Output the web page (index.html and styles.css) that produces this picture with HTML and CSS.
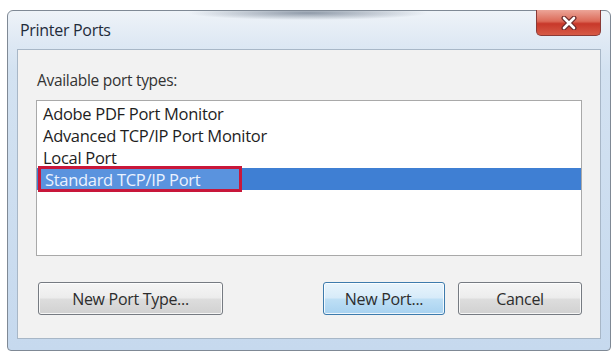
FILE: index.html
```html
<!DOCTYPE html>
<html>
<head>
<meta charset="utf-8">
<link rel="stylesheet" href="styles.css">
</head>
<body>
<div class="window">
  <div class="titlebar">
    <span class="title">Printer Ports</span>
    <div class="close" aria-label="Close">
      <svg width="16" height="14" viewBox="0 0 16 14">
        <path d="M3 2 L13 12 M13 2 L3 12" stroke="#6b2a2a" stroke-width="5" stroke-linecap="round"/>
        <path d="M3 2 L13 12 M13 2 L3 12" stroke="#ffffff" stroke-width="2.6" stroke-linecap="round"/>
      </svg>
    </div>
  </div>
  <div class="panel">
    <div class="label">Available port types:</div>
    <div class="listbox">
      <div class="row">Adobe PDF Port Monitor</div>
      <div class="row">Advanced TCP/IP Port Monitor</div>
      <div class="row">Local Port</div>
      <div class="row selected"><span class="mark">Standard TCP/IP Port</span></div>
    </div>
    <div class="buttons">
      <button class="btn btn-type">New Port Type...</button>
      <span class="spacer"></span>
      <button class="btn btn-default">New Port...</button>
      <button class="btn btn-cancel">Cancel</button>
    </div>
  </div>
</div>
</body>
</html>
```

FILE: styles.css
```css
html, body {
  margin: 0;
  padding: 0;
  background: #ffffff;
}

body {
  font-family: "Open Sans", "Noto Sans", sans-serif;
  color: #2a2a2a;
}

.window {
  box-sizing: border-box;
  margin: 10px 0 0 7px;
  width: 604px;
  height: 341px;
  border: 1px solid #7f8995;
  border-radius: 6px 6px 4px 4px;
  padding: 0 9px 11px 9px;
  display: flex;
  flex-direction: column;
  background:
    radial-gradient(ellipse 120px 7px at 300px 2px, rgba(80, 95, 115, 0.6), rgba(80, 95, 115, 0) 100%),
    linear-gradient(180deg, #eef3f8 0px, #dfe9f4 30px, #d3e2f1 60px, #c6d9ee 100%);
}

.titlebar {
  height: 38px;
  display: flex;
  align-items: center;
  justify-content: space-between;
}

.title {
  font-size: 16px;
  color: #1f2b3a;
  margin-left: 3px;
  letter-spacing: -0.3px;
}

.close {
  align-self: flex-start;
  margin-top: -1px;
  width: 65px;
  height: 26px;
  box-sizing: border-box;
  border: 1px solid #8a3a36;
  border-top: none;
  border-radius: 0 0 5px 5px;
  background: linear-gradient(180deg, #eca598 0%, #dc6a58 45%, #c8382a 55%, #d65a46 100%);
  display: flex;
  align-items: center;
  justify-content: center;
}

.panel {
  flex: 1;
  box-sizing: border-box;
  border: 1px solid #a8b7c7;
  background: #f2f2f2;
  padding: 20px 18px 0 18px;
  display: flex;
  flex-direction: column;
}

.label {
  font-size: 15.5px;
  line-height: 20px;
  height: 20px;
  margin-left: 1px;
  color: #333333;
  letter-spacing: -0.3px;
}

.listbox {
  margin-top: 10px;
  height: 156px;
  box-sizing: border-box;
  border: 1px solid #a9a9a9;
  background: #ffffff;
  padding-top: 1px;
}

.row {
  height: 22px;
  display: flex;
  align-items: center;
  padding-left: 6px;
  font-size: 16.5px;
  color: #1e1e1e;
  letter-spacing: -0.3px;
  white-space: nowrap;
}

.row.selected {
  background: #3f7fd3;
  color: #eaf2ff;
  padding-left: 1px;
}

.mark {
  box-sizing: border-box;
  display: inline-flex;
  align-items: center;
  width: 204px;
  height: 26px;
  margin: -2px 0;
  border: 3px solid #c8173a;
  padding-left: 4px;
  background: #5a93de;
}

.buttons {
  margin-top: 26px;
  display: flex;
  align-items: center;
}

.spacer {
  flex: 1;
}

.btn {
  box-sizing: border-box;
  height: 33px;
  border: 1px solid #767b82;
  border-radius: 3px;
  font-family: "Open Sans", "Noto Sans", sans-serif;
  font-size: 16px;
  color: #2d2d2d;
  letter-spacing: -0.3px;
  background: linear-gradient(180deg, #f6f6f6 0%, #ececec 48%, #dddddd 52%, #d1d1d1 100%);
  box-shadow: inset 0 0 0 1px rgba(255, 255, 255, 0.8);
  padding: 0;
}

.btn-type {
  width: 185px;
  margin-left: 2px;
}

.btn-default {
  width: 122px;
  border-color: #3d7bad;
  background: linear-gradient(180deg, #e8f4fc 0%, #d7ebf9 48%, #bedff5 52%, #a8d2f0 100%);
}

.btn-cancel {
  width: 124px;
  margin-left: 13px;
}
```
